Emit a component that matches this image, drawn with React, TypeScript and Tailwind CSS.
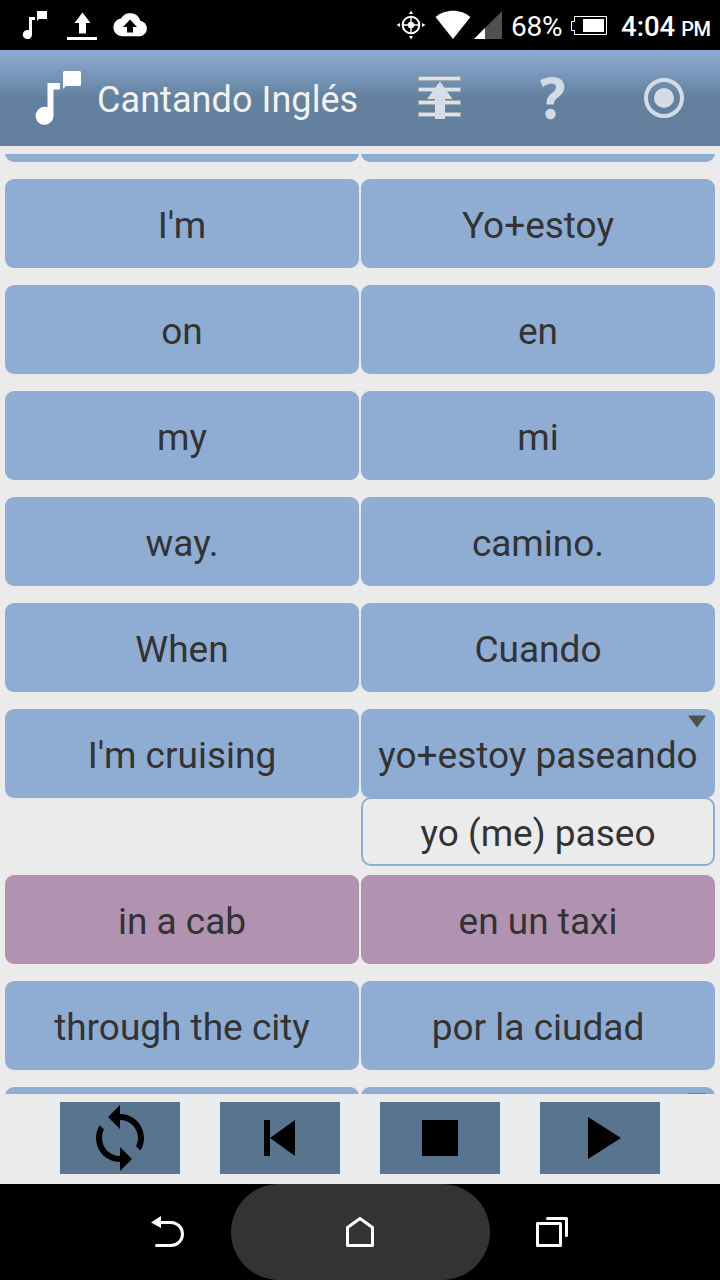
import type { ReactNode } from "react";

type Row = {
  en: string;
  es: string;
  alt?: string;
  tone?: "blue" | "mauve";
};

const rows: Row[] = [
  { en: "I'm", es: "Yo+estoy" },
  { en: "on", es: "en" },
  { en: "my", es: "mi" },
  { en: "way.", es: "camino." },
  { en: "When", es: "Cuando" },
  { en: "I'm cruising", es: "yo+estoy paseando", alt: "yo (me) paseo" },
  { en: "in a cab", es: "en un taxi", tone: "mauve" },
  { en: "through the city", es: "por la ciudad" },
];

function Cell({ tone = "blue", children }: { tone?: "blue" | "mauve"; children?: ReactNode }) {
  const bg = tone === "mauve" ? "bg-[#b192b1]" : "bg-[#8facd3]";
  return (
    <div className={`relative flex h-[89px] items-center justify-center rounded-[9px] pt-[5px] whitespace-nowrap ${bg}`}>
      {children}
    </div>
  );
}

function MoreMarker() {
  return (
    <svg className="absolute top-[6px] right-[8px] h-[13px] w-5" viewBox="0 0 20 13">
      <path d="M1 .5h18L10 12.5z" fill="#505050" />
    </svg>
  );
}

function WordRow({ row }: { row: Row }) {
  return (
    <div className={`grid shrink-0 grid-cols-2 items-start gap-x-0.5 ${row.alt ? "mb-[9px]" : "mb-[17px]"}`}>
      <Cell tone={row.tone}>{row.en}</Cell>
      <div>
        <Cell tone={row.tone}>
          {row.es}
          {row.alt && <MoreMarker />}
        </Cell>
        {row.alt && (
          <div className="-mt-px flex h-[69px] items-center justify-center rounded-[10px] border-2 border-[#8facd3] pt-[5px]">
            {row.alt}
          </div>
        )}
      </div>
    </div>
  );
}

function StatusBar() {
  return (
    <div className="flex h-[50px] shrink-0 bg-black text-white">
      <svg className="h-[50px] w-[160px]" viewBox="0 0 160 50" fill="#fff">
        <path d="M29 17h6v3h-3v14.500a4.600 4.600 0 1 1-3-4.300z" />
        <path d="M37 11h10v8h-8l-2 2z" />
        <path d="M82.500 12.500 90.500 23H86v10.500h-7V23h-4.500z" />
        <path d="M67 37h30v3H67z" />
        <path d="M122 36.300a9 9 0 0 1-1-17.900 10.600 10.600 0 0 1 19.300 2.400A7.800 7.800 0 0 1 139.500 36.300z" />
        <path d="M130 19.500 137 27h-4v5.500h-6V27h-4z" fill="#000" />
      </svg>
      <div className="w-[232px]" />
      <svg className="h-[50px] w-[114px]" viewBox="392 0 114 50" fill="#fff">
        <circle cx="411" cy="25" r="8.300" fill="none" stroke="#fff" strokeWidth="2" />
        <circle cx="411" cy="25" r="3.200" />
        <path d="M410.300 17h1.400v16h-1.400zM403 24.300h16v1.400h-16z" />
        <path d="m411 10.500 2 3.500h-4zM411 39.500l2-3.500h-4zM396.500 25l3.500-2v4zM425.500 25l-3.500-2v4z" />
        <path d="M435.500 17C445 8.500 461 8.500 470.500 17L453 39z" />
        <path d="M474 39 502 11v28z" fill="#505050" />
        <path d="M474 39 485 28v11z" />
      </svg>
      <div className="w-[63px] pt-[7px] pl-[5px] text-[28px] leading-10 tracking-[-0.200px]">68%</div>
      <svg className="h-[50px] w-[46px]" viewBox="569 0 46 50">
        <path d="M574.500 16.500h32v18h-32v-4h-3v-9h3z" fill="none" stroke="#fff" />
        <path d="M583 19h21v13h-21z" fill="#fff" />
      </svg>
      <div className="pt-[7px] pl-[6px] text-[27.500px] leading-10 font-medium whitespace-nowrap">
        4:04<span className="ml-[6px] text-[20px] tracking-[-0.500px]">PM</span>
      </div>
    </div>
  );
}

function Header() {
  return (
    <header className="flex h-24 shrink-0 items-center bg-[linear-gradient(#8facd5_0%,#63819e_50%,#63819e_100%)]">
      <svg className="h-24 w-[97px] shrink-0" viewBox="0 50 97 96" fill="#fff">
        <path d="M47.500 83H60v6.500h-6.500V116a9 9 0 1 1-6-8.700z" />
        <path d="M64.500 71h15q1.500 0 1.500 1.500v12q0 1.500-1.500 1.500H66l-3 3V72.500q0-1.500 1.500-1.500z" />
      </svg>
      <h1 className="w-[303px] shrink-0 pt-1 text-[36px] leading-none font-normal tracking-[0.070px] whitespace-nowrap text-[#f2f2f2]">
        Cantando Inglés
      </h1>
      <svg className="h-24 w-[320px] shrink-0" viewBox="400 50 320 96" fill="none">
        <g fill="#dce2ea" stroke="#a4a9ad" strokeWidth="1">
          <path d="M418.500 76.500h42v4h-42zM418.500 87.500h42v4h-42zM418.500 100.500h42v4h-42zM418.500 112.500h42v4h-42z" />
        </g>
        <path d="M440 81.500 452.500 99H445v20h-10V99h-8z" fill="#d6dfe8" />
        <path d="M540 80.500Q545.500 77 552 77C560 77 564.300 81 564.300 87C564.300 91.500 562 94.200 558.500 97C555 99.800 554 101 554 104.500H546.500C546.500 99 547.500 96.500 552 93C555.500 90.300 556 89 556 87.200C556 84.800 554.500 83.500 551.500 83.500Q547.500 83.500 542.800 87z" fill="#d2dbe4" />
        <circle cx="550.500" cy="114" r="5.200" fill="#d2dbe4" />
        <circle cx="664" cy="98" r="18" stroke="#d3dce6" strokeWidth="4" />
        <circle cx="664" cy="98" r="10" fill="#d3dce6" />
      </svg>
    </header>
  );
}

function Control({ label, children }: { label: string; children: ReactNode }) {
  return (
    <button aria-label={label} className="h-[72px] w-[120px] bg-[#58748e]">
      <svg className="h-[72px] w-[120px]" viewBox="0 0 120 72">
        {children}
      </svg>
    </button>
  );
}

function Controls() {
  return (
    <div className="flex h-[90px] shrink-0 justify-center gap-10 pt-2">
      <Control label="Repeat">
        <path d="M60 3v9c13.300 0 24 10.800 24 24 0 4.200-1 8.800-3.500 12.500L76 44.300c1.300-2.500 2-5.300 2-8.300 0-10-8-18-18-18v9L48 15z" />
        <path d="M60 69v-9c-13.300 0-24-10.800-24-24 0-4.700 1.300-9 3.700-12.800L44 27.500C42.700 30 42 33 42 36c0 10 8 18 18 18v-9l12 12z" />
      </Control>
      <Control label="Previous">
        <path d="M44 18h6v36h-6zM75 18v36L50 36z" />
      </Control>
      <Control label="Stop">
        <path d="M42 18h36v36H42z" />
      </Control>
      <Control label="Play">
        <path d="M48 15v42l33-21z" />
      </Control>
    </div>
  );
}

function NavBar() {
  return (
    <nav className="flex h-24 shrink-0 items-center justify-center bg-black">
      <svg className="h-24 w-[110px]" viewBox="121 1184 110 96" fill="none" stroke="#fff" strokeWidth="3" strokeLinecap="round">
        <path d="M159 1222.500h12a11.500 11.500 0 0 1 0 23h-14.500" />
        <path d="M151 1222.500 161 1216v12z" fill="#fff" stroke="none" />
      </svg>
      <div className="flex h-24 w-[259px] items-center justify-center rounded-full bg-[#333333]">
        <svg className="h-24 w-[60px]" viewBox="330 1184 60 96" fill="none" stroke="#fff" strokeWidth="3" strokeLinejoin="round">
          <path d="M347.500 1227.500 360 1218.500l12.500 9v18h-25z" />
        </svg>
      </div>
      <svg className="h-24 w-[110px]" viewBox="490 1184 110 96" fill="none" stroke="#fff" strokeWidth="3" strokeLinecap="round" strokeLinejoin="round">
        <path d="M537.500 1223.500h23v22h-23zM547.500 1218.500h19v17" />
      </svg>
    </nav>
  );
}

export default function App() {
  return (
    <div className="flex h-[1280px] w-[720px] flex-col overflow-hidden bg-[#ebebeb] font-[Roboto,sans-serif]">
      <StatusBar />
      <Header />
      <main className="mt-2 flex h-[940px] shrink-0 flex-col overflow-hidden px-[5px] text-[37px] leading-[42px] text-[#333333]">
        <div className="-mt-[81px] mb-[17px] grid shrink-0 grid-cols-2 gap-x-0.5">
          <Cell />
          <Cell />
        </div>
        {rows.map((row) => (
          <WordRow key={row.en} row={row} />
        ))}
        <div className="grid shrink-0 grid-cols-2 gap-x-0.5">
          <Cell />
          <Cell>
            <MoreMarker />
          </Cell>
        </div>
      </main>
      <Controls />
      <NavBar />
    </div>
  );
}
